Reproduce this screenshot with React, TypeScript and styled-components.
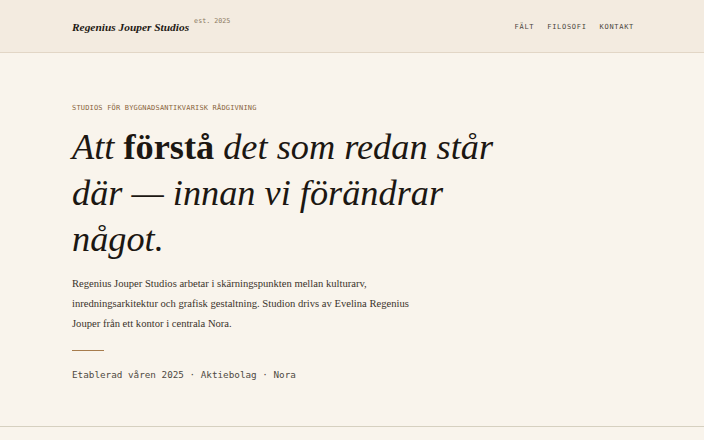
import React from "react";
import styled, { createGlobalStyle } from "styled-components";

const GlobalStyle = createGlobalStyle`
  html, body {
    margin: 0;
    padding: 0;
    background: #f9f4ec;
  }
  * {
    box-sizing: border-box;
  }
`;

const serif = `"Liberation Serif", "DejaVu Serif", serif`;
const mono = `"DejaVu Sans Mono", "Liberation Mono", monospace`;

const Page = styled.div`
  min-height: 100vh;
  background: #f9f4ec;
  color: #1c1712;
  font-family: ${serif};
`;

const Header = styled.header`
  display: flex;
  justify-content: space-between;
  align-items: center;
  height: 53px;
  padding: 0 70px 0 72px;
  background: #f3ebe0;
  border-bottom: 1px solid #e2d6c6;
`;

const Brand = styled.div`
  display: flex;
  align-items: flex-start;
  gap: 5px;
`;

const BrandName = styled.span`
  font-family: ${serif};
  font-style: italic;
  font-weight: 700;
  font-size: 11.4px;
  color: #1f1a14;
  margin-top: 1px;
`;

const Est = styled.span`
  font-family: ${mono};
  font-size: 6.7px;
  color: #8c7a62;
  margin-top: -3px;
`;

const Nav = styled.nav`
  display: flex;
  gap: 13px;
  margin-top: 2px;
`;

const NavLink = styled.a`
  font-family: ${mono};
  font-size: 7px;
  letter-spacing: 0.7px;
  color: #4c4740;
  text-decoration: none;
`;

const Hero = styled.section`
  padding: 51px 72px 40px;
  border-bottom: 1px solid #d6d0c0;
  height: 374px;
`;

const Eyebrow = styled.div`
  font-family: ${mono};
  font-size: 7px;
  letter-spacing: 0.18px;
  color: #8a6640;
  margin-bottom: 12px;
`;

const Headline = styled.h1`
  margin: 0 0 12px;
  max-width: 440px;
  font-family: ${serif};
  font-style: italic;
  font-weight: 400;
  font-size: 36.3px;
  line-height: 46px;
  color: #1c1712;
`;

const Emphasis = styled.strong`
  font-style: normal;
  font-weight: 700;
`;

const Lead = styled.p`
  margin: 0;
  max-width: 340px;
  font-family: ${serif};
  font-size: 10.6px;
  line-height: 20px;
  color: #3a332b;
`;

const Rule = styled.div`
  width: 32px;
  height: 1px;
  margin: 16px 0 18px;
  background: #a77c4d;
`;

const Meta = styled.div`
  font-family: ${mono};
  font-size: 9.3px;
  line-height: 12px;
  color: #4f4a43;
`;

const App: React.FC = () => {
  return (
    <Page>
      <GlobalStyle />
      <Header>
        <Brand>
          <BrandName>Regenius Jouper Studios</BrandName>
          <Est>est. 2025</Est>
        </Brand>
        <Nav>
          <NavLink href="#falt">FÄLT</NavLink>
          <NavLink href="#filosofi">FILOSOFI</NavLink>
          <NavLink href="#kontakt">KONTAKT</NavLink>
        </Nav>
      </Header>

      <Hero>
        <Eyebrow>STUDIOS FÖR BYGGNADSANTIKVARISK RÅDGIVNING</Eyebrow>
        <Headline>
          Att <Emphasis>förstå</Emphasis> det som redan står där — innan vi förändrar något.
        </Headline>
        <Lead>
          Regenius Jouper Studios arbetar i skärningspunkten mellan kulturarv,
          inredningsarkitektur och grafisk gestaltning. Studion drivs av Evelina
          Regenius Jouper från ett kontor i centrala Nora.
        </Lead>
        <Rule />
        <Meta>Etablerad våren 2025 · Aktiebolag · Nora</Meta>
      </Hero>
    </Page>
  );
};

export default App;
